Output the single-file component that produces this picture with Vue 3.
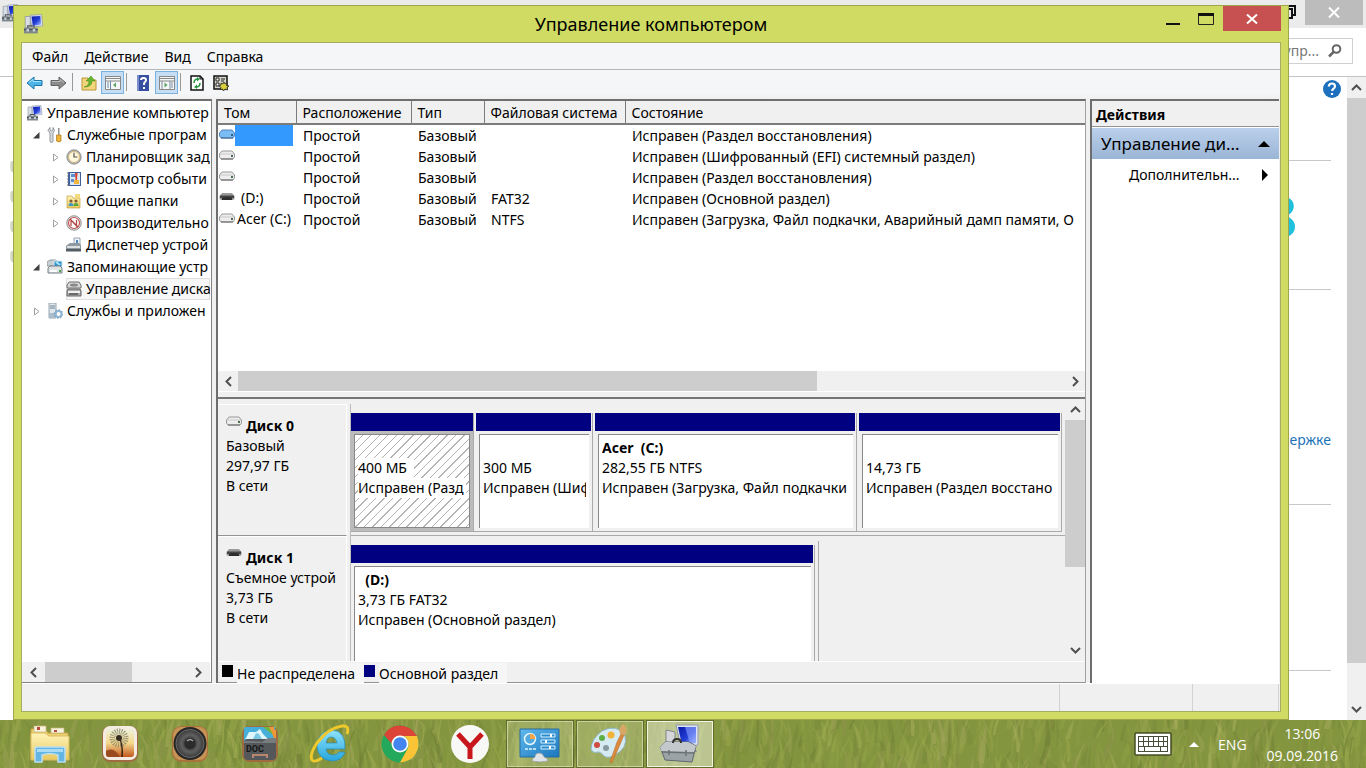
<script setup>
const menu = ['Файл', 'Действие', 'Вид', 'Справка']

const tree = [
  { label: 'Управление компьютер', icon: 'computer', level: 0, arrow: '' },
  { label: 'Служебные програм', icon: 'tools', level: 1, arrow: 'open' },
  { label: 'Планировщик зад', icon: 'clock', level: 2, arrow: 'closed' },
  { label: 'Просмотр событи', icon: 'journal', level: 2, arrow: 'closed' },
  { label: 'Общие папки', icon: 'shared', level: 2, arrow: 'closed' },
  { label: 'Производительно', icon: 'perf', level: 2, arrow: 'closed' },
  { label: 'Диспетчер устрой', icon: 'device', level: 2, arrow: '' },
  { label: 'Запоминающие устр', icon: 'storage', level: 1, arrow: 'open' },
  { label: 'Управление диска', icon: 'disks', level: 2, arrow: '', selected: true },
  { label: 'Службы и приложен', icon: 'services', level: 1, arrow: 'closed' }
]

const volumes = [
  { name: '', icon: 'drive-blue', fs: '', state: 'Исправен (Раздел восстановления)', selected: true },
  { name: '', icon: 'drive', fs: '', state: 'Исправен (Шифрованный (EFI) системный раздел)' },
  { name: '', icon: 'drive', fs: '', state: 'Исправен (Раздел восстановления)' },
  { name: '(D:)', icon: 'drive-dark', fs: 'FAT32', state: 'Исправен (Основной раздел)', spaced: true },
  { name: 'Acer (C:)', icon: 'drive', fs: 'NTFS', state: 'Исправен (Загрузка, Файл подкачки, Аварийный дамп памяти, О' }
]

const disks = [
  {
    name: 'Диск 0', icon: 'drive', lines: ['Базовый', '297,97 ГБ', 'В сети'],
    parts: [
      { name: '', size: '400 МБ', state: 'Исправен (Разд', weight: 122, selected: true },
      { name: '', size: '300 МБ', state: 'Исправен (Шиф', weight: 116 },
      { name: 'Acer  (C:)', size: '282,55 ГБ NTFS', state: 'Исправен (Загрузка, Файл подкачки', weight: 261 },
      { name: '', size: '14,73 ГБ', state: 'Исправен (Раздел восстано', weight: 202 }
    ]
  },
  {
    name: 'Диск 1', icon: 'drive-dark', lines: ['Съемное устрой', '3,73 ГБ', 'В сети'],
    parts: [
      { name: '  (D:)', size: '3,73 ГБ FAT32', state: 'Исправен (Основной раздел)', weight: 463 }
    ],
    rest: 243
  }
]

const apps = [
  { icon: 't-explorer', label: 'Проводник' },
  { icon: 't-photo', label: 'Фото' },
  { icon: 't-speaker', label: 'Музыка' },
  { icon: 't-doc', label: 'Документы' },
  { icon: 't-ie', label: 'Internet Explorer' },
  { icon: 't-chrome', label: 'Chrome' },
  { icon: 't-yandex', label: 'Яндекс' },
  { icon: 't-panel', label: 'Панель управления', open: true },
  { icon: 't-paint', label: 'Paint', open: true },
  { icon: 't-manage', label: 'Управление компьютером', open: true, active: true }
]

let seed = 11
const rnd = () => (seed = (seed * 16807) % 2147483647) / 2147483647
const tints = ['#a9b35a', '#76873a', '#95a54a', '#6e7d35', '#a8ab60', '#8fa044', '#82943f', '#9ba84c', '#8c924c']
const blades = Array.from({ length: 1500 }, () => {
  const x = Math.round(rnd() * 1400 - 15)
  const y = Math.round(rnd() * 70 + 8)
  const h = Math.round(rnd() * 30 + 14)
  const lean = Math.round(rnd() * 26 - 11)
  const w = Math.round(rnd() * 4 + 1)
  return {
    d: `M${x} ${y}Q${x + 1} ${y - h / 2} ${x + lean} ${y - h}Q${x + w + 3} ${y - h / 2} ${x + w} ${y}Z`,
    fill: tints[Math.floor(rnd() * tints.length)],
    o: (0.2 + rnd() * 0.35).toFixed(2)
  }
})
</script>

<template>
  <div class="screen">
    <svg class="defs" width="0" height="0" aria-hidden="true">
      <defs>
        <linearGradient id="gBlue" x1="0" y1="0" x2="1" y2="1"><stop offset="0" stop-color="#0a18a8" /><stop offset=".55" stop-color="#2440d8" /><stop offset="1" stop-color="#c3d4ff" /></linearGradient>
        <linearGradient id="gFolder" x1="0" y1="0" x2="0" y2="1"><stop offset="0" stop-color="#fff3b8" /><stop offset="1" stop-color="#e9c95f" /></linearGradient>
        <linearGradient id="gSky" x1="0" y1="0" x2="1" y2="1"><stop offset="0" stop-color="#5fb9ee" /><stop offset="1" stop-color="#1b76bd" /></linearGradient>
        <linearGradient id="gSunset" x1="0" y1="0" x2="0" y2="1"><stop offset="0" stop-color="#eef0dc" /><stop offset=".5" stop-color="#f4d98e" /><stop offset="1" stop-color="#c2561c" /></linearGradient>
        <linearGradient id="gIe" x1="0" y1="0" x2="0" y2="1"><stop offset="0" stop-color="#8fe3fb" /><stop offset="1" stop-color="#27a6dd" /></linearGradient>
        <radialGradient id="gSpeaker"><stop offset="0" stop-color="#777" /><stop offset=".35" stop-color="#3b3b3b" /><stop offset=".6" stop-color="#606060" /><stop offset="1" stop-color="#3a3a3a" /></radialGradient>
      </defs>
      <symbol id="computer" viewBox="0 0 16 16">
        <path d="M1 2h4v9H1z" fill="#d9dde4" stroke="#8b93a0" stroke-width=".6" />
        <path d="M5 1l9-.5 1 9-9 1z" fill="#dfe5f2" stroke="#8c96ad" stroke-width=".6" />
        <path d="M6 2l7-.5.8 7L7 9.300z" fill="url(#gBlue)" />
        <path d="M0 11h11v4.500H0z" fill="#7d878d" /><path d="M3 11V9.500h5V11M0 12.500h11" fill="none" stroke="#4d555a" /><path d="M2 12h2v2H2zM7 12h2v2H7z" fill="#ccd2d5" />
      </symbol>
      <symbol id="tools" viewBox="0 0 16 16">
        <path d="M3 6v8a1.500 1.500 0 0 0 3 0V6l1.500-2.500L6 .5V3L4.500 4 3 3V.5L1 3.500z" fill="#d9dde0" stroke="#7b8489" stroke-width=".8" />
        <path d="M11 1h1.500v7H11z" fill="#8c9296" /><path d="M9.500 8h4.500v6q-2 2-4.500 0z" fill="#efb437" stroke="#a9761b" stroke-width=".7" />
      </symbol>
      <symbol id="clock" viewBox="0 0 16 16">
        <circle cx="8" cy="8" r="7.200" fill="#aeb3b7" stroke="#777" stroke-width=".7" /><circle cx="8" cy="8" r="5.500" fill="#fff7dd" stroke="#d6b878" /><path d="M8 3.800V8h3.500" fill="none" stroke="#555" stroke-width="1.200" />
      </symbol>
      <symbol id="journal" viewBox="0 0 16 16">
        <path d="M2 1h13v14H2z" fill="#3d5f9f" /><path d="M4 2h10v12H4z" fill="#dce8f4" /><path d="M5 3h4v3H5zM5 8h3v3H5z" fill="#5f8ed0" /><path d="M9 2h2.500l-.5 7H9.500z" fill="#dc3f2d" /><path d="M8 9h5v4H8z" fill="#efb63e" /><path d="M1 2h2M1 5h2M1 8h2M1 11h2M1 14h2" stroke="#777" />
      </symbol>
      <symbol id="shared" viewBox="0 0 16 16">
        <path d="M1 3h5l1 2h7v10H1z" fill="url(#gFolder)" stroke="#c9a03c" stroke-width=".7" /><path d="M9 1h5v4H9z" fill="#f4dc7e" /><circle cx="5" cy="8" r="1.600" fill="#845b30" /><circle cx="10" cy="8" r="1.600" fill="#845b30" /><path d="M2.500 13q0-3 2.500-3t2.500 3z" fill="#3f9ac9" /><path d="M7.500 13q0-3 2.500-3t2.500 3z" fill="#5aa83c" />
      </symbol>
      <symbol id="perf" viewBox="0 0 16 16">
        <circle cx="8" cy="8" r="7.200" fill="#eee" stroke="#888" /><circle cx="8" cy="8" r="5.500" fill="#fff" stroke="#c3524f" stroke-width="1.200" /><path d="M5 11V5l5.500 6V5M4 4l8 8" fill="none" stroke="#b04440" stroke-width="1.200" />
      </symbol>
      <symbol id="device" viewBox="0 0 16 16">
        <path d="M8 1h6v7H8z" fill="#eef3f8" stroke="#82909d" stroke-width=".8" /><path d="M10 3h2v3h-2z" fill="#4f86b9" /><path d="M1 8l3-2h9l2 2v6H0V9z" fill="#8d999f" /><path d="M1 9h13v2H1z" fill="#dbe0e2" /><path d="M0 12h15v2.500H0z" fill="#535d63" />
      </symbol>
      <symbol id="storage" viewBox="0 0 16 16">
        <path d="M0 3l3-2h6l2 2v4H0z" fill="#c9d0d4" stroke="#738086" stroke-width=".7" /><path d="M7 2h8v6H7z" fill="#2d91cb" stroke="#dceaf2" /><path d="M9 3l4 3" stroke="#a9e4ff" stroke-width="2" /><path d="M1 9l2-2h10l2 2v5H1z" fill="#dfe2e3" stroke="#747e82" /><path d="M3 11h7v2H3z" fill="#fff" /><path d="M12 11h2v2h-2z" fill="#45a94b" />
      </symbol>
      <symbol id="disks" viewBox="0 0 16 16">
        <path d="M1 4l2-3h10l2 3v3H1z" fill="#d7d7d7" stroke="#707070" /><ellipse cx="8" cy="4" rx="4" ry="1.500" fill="#888" /><path d="M1 10l1-2h12l1 2v5H1z" fill="#aaa" stroke="#666" /><path d="M2 10h12v2H2z" fill="#eee" /><path d="M3 13h9" stroke="#555" stroke-width="1.500" />
      </symbol>
      <symbol id="services" viewBox="0 0 16 16">
        <path d="M2 0h7v15H2z" fill="#dfe7ed" stroke="#82929e" stroke-width=".8" /><path d="M3 3h5M3 5h5" stroke="#6b8295" /><path d="M2 10h7v5H2z" fill="#aabdca" /><circle cx="11.500" cy="11" r="3" fill="none" stroke="#8eb5d3" stroke-width="2" /><circle cx="11.500" cy="11" r="4.300" fill="none" stroke="#6894b6" stroke-width="1" stroke-dasharray="1.500 1.800" />
      </symbol>
      <symbol id="drive" viewBox="0 0 16 10">
        <path d="M.5 4L3 1h10l2.500 3v3L14 9H2L.5 7z" fill="#ededed" stroke="#909090" stroke-width=".9" /><path d="M1 4h14" stroke="#c9c9c9" /><path d="M2 9h12" stroke="#666" /><path d="M12 5h2v2h-2z" fill="#4d6d4d" />
      </symbol>
      <symbol id="drive-blue" viewBox="0 0 16 10">
        <path d="M.5 4L3 1h10l2.500 3v3L14 9H2L.5 7z" fill="#7bbcf4" stroke="#4a7eb5" stroke-width=".9" /><path d="M2 9h12" stroke="#42648a" /><path d="M12 5h2v2h-2z" fill="#315b82" />
      </symbol>
      <symbol id="drive-dark" viewBox="0 0 16 10">
        <path d="M.5 4L3 1h10l2.500 3v3L14 8H2L.5 7z" fill="#9a9a9a" /><path d="M1 3.500h14V6H1z" fill="#444" /><path d="M3 6q5-2 10 0v2H3z" fill="#2d2d2d" />
      </symbol>

      <symbol id="t-explorer" viewBox="0 0 42 40">
        <path d="M2 5h14l3 4h20v26H2z" fill="#ecd16f" stroke="#c7a443" /><path d="M5 2h12v6H5zM22 4h13v5H22z" fill="#f7f3df" stroke="#cab679" stroke-width=".7" /><path d="M8 3h3v3H8zM25 6h3v2h-3z" fill="#b84b39" /><path d="M2 9h14l4 3h20v24H2z" fill="url(#gFolder)" stroke="#d9bb61" /><path d="M6 25q0-2 2-2h26q2 0 2 2v13h-7V31q-8-3-16 0v7H6z" fill="#64b5e2" stroke="#b9e0f4" stroke-width="1.500" /><path d="M8 25h26v3H8z" fill="#a9dbf5" />
      </symbol>
      <symbol id="t-photo" viewBox="0 0 42 40">
        <rect x="3" y="2" width="36" height="36" rx="8" fill="#a26a43" /><rect x="4" y="2" width="34" height="34" rx="7" fill="#f4ece2" /><rect x="7" y="5" width="28" height="28" rx="3" fill="url(#gSunset)" /><path d="M21 15q3 8 2 18" fill="none" stroke="#38220f" stroke-width="1.500" /><circle cx="20" cy="14" r="6.500" fill="none" stroke="#77765f" stroke-width="6" stroke-dasharray="1 1" opacity=".7" /><circle cx="20" cy="14" r="3" fill="#332b20" /><path d="M7 27q8-5 14 6H10q-3 0-3-3z" fill="#9b4a20" />
      </symbol>
      <symbol id="t-speaker" viewBox="0 0 42 40">
        <rect x="3" y="2" width="36" height="36" rx="9" fill="#a9743c" /><rect x="4" y="3" width="34" height="33" rx="8" fill="#c69255" /><circle cx="21" cy="19.500" r="16.500" fill="#272727" /><circle cx="21" cy="19.500" r="14" fill="url(#gSpeaker)" stroke="#6b6b6b" /><circle cx="21" cy="19.500" r="5.500" fill="#2b2b2b" /><path d="M18 17q3-3 6 0" stroke="#a4a4a4" stroke-width="1.500" fill="none" />
      </symbol>
      <symbol id="t-doc" viewBox="0 0 42 40">
        <rect x="3" y="2" width="36" height="36" rx="8" fill="#a16b40" /><path d="M5 5q0-2 3-2h28v20H5z" fill="#45afd9" /><path d="M27 3h8v8zM31 5l6 1v13z" fill="#ef9739" /><path d="M24 3h6l4 8z" fill="#68b641" /><path d="M7 14l3-6h7l4-3 3 5 5 5H6z" fill="#dff6fb" /><path d="M17 9l-3 6h9l-3-5z" fill="#7cc9e6" /><rect x="5" y="15" width="32" height="21" rx="4" fill="#54585a" /><path d="M5 17q12 0 18 1l6-4h8v5H5z" fill="#777c7e" /><text x="7" y="28" font-size="9" fill="#151515" font-weight="bold" font-family="Roboto, sans-serif">DOC</text><path d="M14 34v-3h14v3" fill="none" stroke="#b9866d" stroke-width="2" />
      </symbol>
      <symbol id="t-ie" viewBox="0 0 42 40">
        <path d="M35 25H17q1 6 7 6 4 0 6-3h6q-3 9-13 9Q9 36 8 22q1-15 15-16 14 1 13 19zM17 19h11q-1-6-6-6-4 0-5 6z" fill="url(#gIe)" stroke="#258bbb" stroke-width=".7" fill-rule="evenodd" /><path d="M13 34Q5 39 3 36 0 31 8 19 19 4 33 2q8-1 5 8" fill="none" stroke="#efc82c" stroke-width="3" />
      </symbol>
      <symbol id="t-chrome" viewBox="0 0 42 40">
        <circle cx="21" cy="20" r="18.500" fill="#24a85b" /><path d="M5 11Q10 1.500 21 1.500T38 12H21q-7 0-8 8z" fill="#db4437" /><path d="M38 12q4 10-2 19-5 7-15 7.500L29 24q2-7-4-12z" fill="#fbc436" /><circle cx="21" cy="20" r="8.500" fill="#fff" /><circle cx="21" cy="20" r="6.800" fill="#4285ee" />
      </symbol>
      <symbol id="t-yandex" viewBox="0 0 42 40"><circle cx="21" cy="20" r="19" fill="#f8f8f7" /><path d="M9 10l12 13 12-13M21 22v13" fill="none" stroke="#c8161d" stroke-width="5" /></symbol>
      <symbol id="t-panel" viewBox="0 0 42 40">
        <path d="M1 5h39v28H1z" fill="url(#gSky)" stroke="#286c9d" /><circle cx="11" cy="15" r="5.500" fill="#55a9df" stroke="#e5f8ff" stroke-width="1.500" /><path d="M11 15V9.500a5.500 5.500 0 0 1 5.500 5.500z" fill="#f5a64b" /><path d="M6 25h11" stroke="#b6def5" stroke-width="2" stroke-dasharray="3 1" /><path d="M22 10h14v3H22zM22 16h14v3H22zM22 22h14v3H22z" fill="#288acb" stroke="#d9f1ff" /><path d="M32 10v3M27 16v3M31 22v3" stroke="#fff" stroke-width="2" /><path d="M13 37q0-3 3-4 0-4 4-4t5 4q4 1 4 4-8 2-16 0z" fill="#dfe3e7" stroke="#8f9a9d" stroke-width=".7" />
      </symbol>
      <symbol id="t-paint" viewBox="0 0 42 40">
        <path d="M13 7Q28-1 36 12q3 12-10 19-7 4-11 1-2-3-5-4-5 2-8-2Q2 15 13 7z" fill="#d6eaf2" stroke="#8fb6c8" /><circle cx="8" cy="21" r="3" fill="#cf4c40" /><circle cx="13" cy="14" r="3" fill="#5daf48" /><circle cx="22" cy="11" r="3.500" fill="#f0b238" /><circle cx="17" cy="24" r="3" fill="#879aa0" /><path d="M21 38l7-20 4-8 3 1-5 12-7 16z" fill="#d98a3c" stroke="#b26b27" stroke-width=".5" /><path d="M31 10Q29 4 34 0q6 4 2 11z" fill="#d8a765" />
      </symbol>
      <symbol id="t-manage" viewBox="0 0 42 40">
        <path d="M7 6l9 2v15l-9-2z" fill="#d5d7da" stroke="#83878c" /><path d="M17 1h22v20l-17 2z" fill="#dfe4f2" stroke="#929bae" /><path d="M19 3h18v16l-14 2z" fill="url(#gBlue)" /><path d="M26 3l5 17 6-1V3z" fill="#8ea5ff" opacity=".6" /><path d="M27 23h8l3 5H24z" fill="#858b8f" /><path d="M1 23l5-5h24l7 4-4 16-27-2z" fill="#9ba3a6" stroke="#60676b" /><path d="M1 23l5-5h23l8 4-2 6-33-1z" fill="#c2c8cb" /><path d="M14 19q0-4 4-4t4 4" fill="none" stroke="#333" stroke-width="2" /><path d="M3 28l32 1M10 26v5M27 26v6" stroke="#6a7174" stroke-width="1.500" />
      </symbol>
    </svg>

    <main class="desktop">
      <section class="back-window" aria-label="Фоновое окно">
        <header class="back-title">
          <svg class="back-icon" width="18" height="18"><use href="#computer" /></svg>
          <svg class="back-restore" width="14" height="14" viewBox="0 0 14 14"><path d="M1 4h9v9H1zM3 4V1h10v9h-3" fill="none" stroke="#111" stroke-width="2" /></svg>
          <button class="back-close" aria-label="Закрыть фон"><svg width="12" height="11" viewBox="0 0 12 11"><path d="M1 .5l10 10M11 .5l-10 10" stroke="#fff" stroke-width="2" /></svg></button>
        </header>
        <div class="back-nav">
          <div class="back-search"><span>упр...</span><svg width="14" height="14" viewBox="0 0 14 14"><circle cx="8.500" cy="5" r="3.800" fill="none" stroke="#666" stroke-width="2" /><path d="M5.500 8L1 12.500" stroke="#666" stroke-width="2.500" /></svg></div>
        </div>
        <div class="back-body">
          <div class="back-side"><i v-for="n in 4" :key="n"></i></div>
          <div class="back-content">
            <div class="back-sec s1"><svg class="help" width="20" height="20" viewBox="0 0 20 20"><circle cx="10" cy="10" r="9" fill="#1c70bd" /><path d="M6.800 7.500Q7 4.500 10 4.500t3 2.800q0 1.700-1.800 2.600-1 .5-1 2M10 14v2" fill="none" stroke="#fff" stroke-width="2.200" /></svg></div>
            <div class="back-sec s2"><span class="logo8">8</span></div>
            <div class="back-sec s3"><a href="#support">ержке</a></div>
            <div class="back-sec s4"></div>
          </div>
          <div class="vbar back-bar">
            <button aria-label="Вверх, фон"><svg width="11" height="7" viewBox="0 0 11 7"><path d="M1 6l4.500-4.500L10 6" /></svg></button>
            <div class="track"><div class="thumb back-thumb"></div></div>
            <button aria-label="Вниз, фон"><svg width="11" height="7" viewBox="0 0 11 7"><path d="M1 1l4.500 4.500L10 1" /></svg></button>
          </div>
        </div>
      </section>

      <section class="window">
        <header class="titlebar">
          <svg class="title-icon" width="20" height="20"><use href="#computer" /></svg>
          <h1>Управление компьютером</h1>
          <div class="controls">
            <button aria-label="Свернуть"><svg width="14" height="12" viewBox="0 0 14 12"><path d="M0 11h14" stroke="#111" stroke-width="2" /></svg></button>
            <button class="max" aria-label="Развернуть"><svg width="16" height="12" viewBox="0 0 16 12"><path d="M.5 0v11.500h15V0" fill="none" stroke="#222" /><path d="M0 1.500h16" stroke="#111" stroke-width="3" /></svg></button>
            <button class="close" aria-label="Закрыть"><svg width="12" height="10" viewBox="0 0 12 10"><path d="M1 .5l10 9M11 .5l-10 9" stroke="#fff" stroke-width="2" /></svg></button>
          </div>
        </header>

        <div class="client">
          <nav class="menubar"><button v-for="m in menu" :key="m">{{ m }}</button></nav>
          <div class="toolbar">
            <button aria-label="Назад"><svg width="17" height="14" viewBox="0 0 17 14"><path d="M1 7l7-6v3.500h8v5H8V13z" fill="#4db4e6" stroke="#1b76aa" /><path d="M3 6.500l4-3v2h8" fill="none" stroke="#a9e2fb" /></svg></button>
            <button aria-label="Вперед"><svg width="17" height="14" viewBox="0 0 17 14"><path d="M16 7L9 1v3.500H1v5h8V13z" fill="#8b8b8b" stroke="#626262" /><path d="M2 5.500h8v-2l4 3" fill="none" stroke="#bbb" /></svg></button>
            <i></i>
            <button aria-label="Вверх на уровень"><svg width="16" height="16" viewBox="0 0 16 16"><path d="M1 3h6l1 2h7v10H1z" fill="#f3d57c" stroke="#bd963b" /><path d="M3 12Q8 11 8 6H5l5-5 4 5h-3q0 6-8 6z" fill="#65b52e" stroke="#438618" stroke-width=".5" /></svg></button>
            <button class="pressed" aria-label="Дерево консоли"><svg width="16" height="16" viewBox="0 0 16 16"><path d="M.5 1.500h15v13H.5z" fill="#f5f6f7" stroke="#888" /><path d="M1 3.500h14M1 6h14" stroke="#888" /><path d="M5.500 6v8M2 8h2M2 10h2M2 12h2" stroke="#6b8baa" /><path d="M11 7.500v5L8 10z" fill="#56a45c" /></svg></button>
            <i></i>
            <button aria-label="Справка"><svg width="16" height="16" viewBox="0 0 16 16"><path d="M2 0h12v16H2z" fill="#364fa0" /><path d="M2 0h2v16H2z" fill="#7a8dcc" /><path d="M6 5Q6 3 8.500 3T11 5q0 1.500-1.500 2.500Q9 8 9 10M9 12v2" stroke="#fff" stroke-width="2" fill="none" /></svg></button>
            <button class="pressed" aria-label="Панель действий"><svg width="16" height="16" viewBox="0 0 16 16"><path d="M.5 1.500h15v13H.5z" fill="#f5f6f7" stroke="#888" /><path d="M1 3.500h14M1 6h14" stroke="#888" /><path d="M11 6v8M3 6v8M12 8h2M12 10h2M12 12h2" stroke="#7a8ba0" /><path d="M5.500 7.500v5l3-2.500z" fill="#56a45c" /></svg></button>
            <i></i>
            <button aria-label="Обновить"><svg width="14" height="16" viewBox="0 0 14 16"><path d="M1 1h9l3 3v11H1z" fill="#fff" stroke="#111" stroke-width="1.500" /><path d="M10 1v3h3" fill="none" stroke="#111" /><path d="M4 8q0-4 4-4M10 8q0 4-4 4" fill="none" stroke="#299442" stroke-width="1.500" /><path d="M7 2l3 2-3 2.500zM7 9.500L4 12l3 2z" fill="#299442" /></svg></button>
            <button aria-label="Параметры"><svg width="16" height="16" viewBox="0 0 16 16"><path d="M1 1h13v13H1z" fill="#d5d4ca" stroke="#111" stroke-width="1.500" /><path d="M3 3h3v3H3zM3 8h3v3H3z" fill="#fff" stroke="#222" /><path d="M8 4h4M8 6h3" stroke="#222" /><path d="M11 7l1 2 2-1-.5 2.500L16 11l-2 1.500.5 2.500-2.500-1-1.500 2-1-2-2.500.5 1-2-2-1.500 2-1V8l2 1z" fill="#dad23c" stroke="#222" stroke-width=".8" /></svg></button>
          </div>

          <div class="panes">
            <aside class="tree-pane">
              <ul class="tree">
                <li v-for="n in tree" :key="n.label" :class="'l' + n.level">
                  <span class="arrow">
                    <svg v-if="n.arrow === 'open'" width="7" height="7" viewBox="0 0 7 7"><path d="M6.500 0v6.500H0z" fill="#404040" /></svg>
                    <svg v-else-if="n.arrow === 'closed'" width="6" height="9" viewBox="0 0 6 9"><path d="M.5 1v7L5 4.500z" fill="#fff" stroke="#a0a0a0" /></svg>
                  </span>
                  <a href="#node" :class="{ sel: n.selected }"><svg width="16" height="16"><use :href="'#' + n.icon" /></svg>{{ n.label }}</a>
                </li>
              </ul>
              <div class="hbar tree-bar">
                <button aria-label="Влево"><svg width="7" height="11" viewBox="0 0 7 11"><path d="M6 1L1.500 5.500 6 10" /></svg></button>
                <div class="track"><div class="thumb tree-thumb"></div></div>
                <button aria-label="Вправо"><svg width="7" height="11" viewBox="0 0 7 11"><path d="M1 1l4.500 4.500L1 10" /></svg></button>
              </div>
            </aside>

            <div class="center-pane">
              <div class="volumes">
                <table>
                  <colgroup><col class="c1" /><col class="c2" /><col class="c3" /><col class="c4" /><col /></colgroup>
                  <thead><tr><th>Том</th><th>Расположение</th><th>Тип</th><th>Файловая система</th><th>Состояние</th></tr></thead>
                  <tbody>
                    <tr v-for="(v, i) in volumes" :key="i">
                      <td class="vol"><div><svg width="16" height="10"><use :href="'#' + v.icon" /></svg><span :class="{ picked: v.selected, spaced: v.spaced }">{{ v.name }}</span></div></td>
                      <td>Простой</td><td>Базовый</td><td>{{ v.fs }}</td><td>{{ v.state }}</td>
                    </tr>
                  </tbody>
                </table>
              </div>
              <div class="hbar list-bar">
                <button aria-label="Список влево"><svg width="7" height="11" viewBox="0 0 7 11"><path d="M6 1L1.500 5.500 6 10" /></svg></button>
                <div class="track"><div class="thumb list-thumb"></div></div>
                <button aria-label="Список вправо"><svg width="7" height="11" viewBox="0 0 7 11"><path d="M1 1l4.500 4.500L1 10" /></svg></button>
              </div>
              <div class="splitter"></div>
              <div class="graph">
                <div class="disks">
                  <div v-for="d in disks" :key="d.name" class="disk">
                    <div class="disk-label">
                      <h2><svg width="16" height="10"><use :href="'#' + d.icon" /></svg>{{ d.name }}</h2>
                      <p v-for="l in d.lines" :key="l">{{ l }}</p>
                    </div>
                    <div class="parts" :class="{ partial: d.rest }">
                      <div v-for="p in d.parts" :key="p.state + p.size" class="part" :class="{ chosen: p.selected }" :style="{ flexGrow: p.weight }">
                        <div class="stripe"></div>
                        <div class="frame"><div class="inner">
                          <p><b>{{ p.name }}</b></p>
                          <p><span>{{ p.size }}</span></p>
                          <p><span>{{ p.state }}</span></p>
                        </div></div>
                      </div>
                      <div v-if="d.rest" class="empty" :style="{ flexGrow: d.rest }"></div>
                    </div>
                  </div>
                </div>
                <div class="vbar graph-bar">
                  <button aria-label="Диски вверх"><svg width="11" height="7" viewBox="0 0 11 7"><path d="M1 6l4.500-4.500L10 6" /></svg></button>
                  <div class="track"><div class="thumb graph-thumb"></div></div>
                  <button aria-label="Диски вниз"><svg width="11" height="7" viewBox="0 0 11 7"><path d="M1 1l4.500 4.500L10 1" /></svg></button>
                </div>
              </div>
              <div class="legend"><span class="sq black"></span><span class="lt">Не распределена</span><span class="sq navy"></span><span class="lt">Основной раздел</span></div>
            </div>

            <aside class="actions">
              <h2>Действия</h2>
              <button class="group"><span>Управление ди...</span><svg width="12" height="6" viewBox="0 0 12 6"><path d="M0 6l6-6 6 6z" /></svg></button>
              <button class="more"><span>Дополнительн...</span><svg width="6" height="12" viewBox="0 0 6 12"><path d="M0 0l6 6-6 6z" /></svg></button>
            </aside>
          </div>
          <footer class="status"><span></span><span></span><span></span></footer>
        </div>
      </section>
    </main>

    <footer class="taskbar">
      <svg class="grass" viewBox="0 0 1366 48" preserveAspectRatio="xMidYMid slice" aria-hidden="true">
        <path v-for="(b, i) in blades" :key="i" :d="b.d" :fill="b.fill" :opacity="b.o" />
      </svg>
      <div class="apps">
        <button v-for="a in apps" :key="a.icon" :class="{ open: a.open, active: a.active }" :aria-label="a.label"><svg width="42" height="40"><use :href="'#' + a.icon" /></svg></button>
      </div>
      <div class="tray">
        <button class="kbd" aria-label="Клавиатура"><svg width="38" height="24" viewBox="0 0 38 24"><rect x="1" y="1" width="36" height="22" rx="1" fill="#fff" stroke="#454c22" stroke-width="1.500" /><path d="M4 4h30v16H4z" fill="#454c3a" /><path d="M5 5h4v4H5zM10 5h4v4h-4zM15 5h4v4h-4zM20 5h4v4h-4zM25 5h4v4h-4zM30 5h3v4h-3zM5 10h4v4H5zM10 10h4v4h-4zM15 10h4v4h-4zM20 10h4v4h-4zM25 10h4v4h-4zM30 10h3v4h-3zM5 15h5v4H5zM11 15h15v4H11zM27 15h6v4h-6z" fill="#fff" /></svg></button>
        <button class="up" aria-label="Скрытые значки"><svg width="10" height="6" viewBox="0 0 10 6"><path d="M0 6l5-5 5 5z" fill="#fff" /></svg></button>
        <span class="lang">ENG</span>
        <div class="time"><span>13:06</span><span>09.09.2016</span></div>
      </div>
    </footer>
  </div>
</template>

<style>
body { overflow: hidden; }
</style>

<style scoped>
* { box-sizing: border-box; }
.screen { display: flex; flex-direction: column; height: 100vh; overflow: hidden; font: 14px/20px "Noto Sans", "Open Sans", sans-serif; color: #000; }
.defs { position: absolute; }
button { border: 0; padding: 0; background: none; font: inherit; color: inherit; display: flex; align-items: center; justify-content: center; }
a { color: inherit; text-decoration: none; }
h1, h2, p, ul { margin: 0; padding: 0; font-weight: 400; list-style: none; }
h2 { font-size: 14px; }
svg { flex: none; display: block; }
.desktop { position: relative; flex: 1; min-height: 0; }

.back-window { height: 100%; display: flex; flex-direction: column; background: #fff; }
.back-title { height: 28px; background: #ebebeb; display: flex; align-items: flex-start; }
.back-icon { margin: 4px 0 0 2px; }
.back-restore { margin: 5px 9px 0 auto; }
.back-close { width: 58px; height: 25px; background: #bcbcbc; margin-right: 3px; }
.back-nav { height: 49px; display: flex; justify-content: flex-end; padding: 10px 13px 0 0; border-bottom: 1px solid #c4c4c4; }
.back-search { width: 110px; height: 26px; border: 1px solid #d0d0d0; display: flex; align-items: center; justify-content: flex-end; gap: 9px; padding-right: 10px; color: #777; }
.back-body { flex: 1; display: flex; min-height: 0; }
.back-side { width: 20px; padding: 84px 0 0 10px; display: flex; flex-direction: column; gap: 18px; }
.back-side i { width: 10px; height: 12px; border-radius: 3px 3px 6px 6px; background: linear-gradient(90deg, #dfe3cf, #8fa2a8); }
.back-content { flex: 1; display: flex; flex-direction: column; align-items: flex-end; padding-right: 16px; }
.back-sec { width: 100px; border-bottom: 1px solid #c8c8c8; display: flex; justify-content: flex-end; }
.s1 { height: 84px; } .s2 { height: 129px; padding: 24px 34px 0 0; } .s3 { height: 215px; align-items: flex-end; padding-bottom: 54px; } .s4 { height: 166px; }
.help { margin: 2px -11px 0 0; }
.logo8 { font: 700 56px/60px "Open Sans", sans-serif; color: #1fc1dc; }
.back-sec a { color: #1c73b8; }
.back-bar { width: 19px; }

.window { position: absolute; top: 5px; left: 13px; right: 77px; bottom: 0; display: flex; flex-direction: column; background: #cfdb63; border: 1px solid #9da64a; padding: 0 7px 7px; }
.titlebar { flex: none; height: 36px; display: grid; grid-template-columns: 1fr auto 1fr; }
.title-icon { margin: 8px 0 0 3px; }
h1 { font-size: 18px; line-height: 36px; }
.controls { display: flex; justify-content: flex-end; }
.controls button { width: 33px; height: 25px; }
.controls .max { margin-right: 1px; }
.controls .close { width: 58px; background: #c75050; }
.client { flex: 1; min-height: 0; display: flex; flex-direction: column; border: 1px solid #a5ad62; background: #f0f0f0; }
.menubar { flex: none; height: 27px; background: #f5f6f7; border-bottom: 1px solid #b5b8bb; display: flex; gap: 16px; padding: 1px 0 0 10px; }
.toolbar { flex: none; height: 29px; background: linear-gradient(#f5f6f7 80%, #f0f0f0); display: flex; align-items: flex-start; gap: 1px; padding: 1px 0 0 1px; }
.toolbar button { width: 23px; height: 23px; }
.toolbar button.pressed { background: #c5def3; border: 1px solid #7bb1df; }
.toolbar i { width: 1px; height: 18px; background: #999; margin: 2px 3px 0 1px; }

.panes { flex: 1; min-height: 0; display: grid; grid-template-columns: 190px minmax(0, 1fr) 189px; gap: 4px; padding-right: 1px; }
.tree-pane, .center-pane, .actions { display: flex; flex-direction: column; min-height: 0; min-width: 0; border-top: 2px solid #6e6e70; }
.tree-pane { background: #fff; border-right: 1px solid #828282; border-bottom: 1px solid #828282; padding-right: 1px; }
.tree { flex: 1; min-height: 0; overflow: hidden; padding: 1px 0 0 1px; }
.tree li { display: flex; height: 22px; }
.arrow { flex: none; width: 19px; display: flex; align-items: center; justify-content: center; padding-right: 2px; }
.l0 .arrow { width: 4px; padding: 0; } .l1 { padding-left: 5px; } .l2 { padding-left: 24px; }
.tree a { flex: 1; min-width: 0; display: flex; align-items: center; gap: 4px; white-space: nowrap; overflow: hidden; }
.tree a.sel { background: #f7f7f7; box-shadow: inset 0 0 0 1px #dedede; }

.hbar { flex: none; height: 20px; display: flex; background: #f0f0f0; }
.vbar { flex: none; display: flex; flex-direction: column; background: #f0f0f0; }
.hbar button { width: 20px; } .vbar button { height: 21px; }
.tree-bar button { width: 23px; }
.hbar button svg, .vbar button svg { fill: none; stroke: #505050; stroke-width: 2; }
.track { flex: 1; min-width: 0; min-height: 0; }
.thumb { background: #cdcdcd; }
.hbar .thumb { height: 100%; }
.tree-thumb { width: 61%; } .list-thumb { width: 70%; } .graph-thumb { height: 67%; } .back-thumb { height: 94%; }

.center-pane { border-left: 2px solid #6e6e70; border-right: 1px solid #a0a0a0; }
.volumes { flex: 1; min-height: 0; background: #fff; overflow: hidden; }
table { width: 100%; table-layout: fixed; border-collapse: collapse; }
.c1 { width: 78px; } .c2 { width: 115px; } .c3 { width: 73px; } .c4 { width: 141px; }
th { height: 23px; padding: 2px 0 0 6px; background: #f0f0f0; font-weight: 400; text-align: left; white-space: nowrap; border-right: 1px solid #7b7b7b; border-bottom: 2px solid #7b7b7b; }
th:last-child { border-right: 0; }
td { height: 21px; padding: 0 0 0 7px; white-space: nowrap; overflow: hidden; }
td.vol { padding: 0 3px 0 1px; }
.vol div { display: flex; height: 21px; }
.vol svg { margin-top: 4px; }
.vol span { flex: 1; padding-left: 2px; }
.vol .picked { background: #3399ff; }
.vol .spaced { padding-left: 6px; }
.splitter { flex: none; height: 8px; background: #f0f0f0; border-bottom: 2px solid #767676; border-top: 1px solid #fff; }
.graph { flex: none; height: 262px; display: flex; }
.graph-bar { width: 20px; }
.disks { flex: 1; min-width: 0; overflow: hidden; display: flex; flex-direction: column; padding-top: 5px; }
.disk { flex: none; height: 132px; display: flex; }
.disk-label { width: 129px; flex: none; padding: 11px 0 0 8px; border-top: 1px solid #fff; border-right: 1px solid #fff; border-bottom: 1px solid #929292; overflow: hidden; white-space: nowrap; }
.disk-label p { overflow: hidden; }
.disk-label h2 { display: flex; gap: 4px; font-weight: 700; }
.parts { flex: 1; min-width: 0; display: flex; margin-left: 3px; padding: 9px 3px 3px 0; border-bottom: 1px solid #aaa; border-left: 1px solid #bbb; }
.part { flex: 0 1 0; min-width: 0; display: flex; flex-direction: column; border-right: 1px solid #aaa; border-bottom: 1px solid #aaa; }
.part + .part { padding-left: 2px; }
.stripe { flex: none; height: 18px; margin-right: 1px; background: #000080; }
.frame { flex: 1; min-height: 0; padding: 3px; }
.inner { height: 100%; background: #fff; border-top: 1px solid #888; border-left: 1px solid #888; padding: 3px 3px 0; overflow: hidden; white-space: pre; }
.inner p { height: 20px; overflow: hidden; }
.part b { font-weight: 700; }
.chosen .stripe { margin-right: 0; }
.chosen .frame { background: #bbb; }
.chosen .inner { border: 1px solid #888; background: repeating-linear-gradient(135deg, #fff 0 5px, #b4b4b4 5px 6px); }
.chosen span { display: inline-block; background: #fff; padding-right: 7px; }
.partial { border-bottom: 0; }
.empty { flex: 0 1 0; border-left: 1px solid #aaa; margin: -4px 0 -4px 3px; }
.legend { flex: none; height: 22px; display: flex; align-items: flex-start; padding: 1px 0 0 4px; border-top: 1px solid #fff; border-bottom: 1px solid #929292; }
.sq { width: 11px; height: 12px; margin-top: 2px; }
.black { background: #000; } .navy { background: #000080; }
.lt { margin-left: 4px; padding-right: 9px; background: #f6f6f6; height: 20px; line-height: 22px; }

.actions { background: #fff; border-left: 2px solid #6e6e70; }
.actions h2 { font-weight: 700; height: 26px; line-height: 28px; padding-left: 4px; background: #f0f0f0; border-bottom: 1px solid #929292; }
.actions button { text-align: left; justify-content: space-between; }
.actions span { min-width: 0; white-space: nowrap; }
.actions .group { height: 31px; margin-top: 1px; padding: 0 9px; background: linear-gradient(#bad0eb, #9bb5d6); font-size: 17px; }
.actions .more { height: 31px; padding: 0 11px 0 37px; }
.status { flex: none; height: 28px; border-top: 1px solid #fff; display: flex; justify-content: flex-end; }
.status span { border-left: 1px solid #d2d2d2; width: 133px; }
.status span:nth-child(2) { width: 86px; } .status span:nth-child(3) { width: 2px; }

.taskbar { position: relative; flex: none; height: 48px; background: #84953f; display: flex; justify-content: space-between; overflow: hidden; }
.grass { position: absolute; inset: 0; width: 100%; height: 100%; }
.apps, .tray { position: relative; display: flex; }
.apps { gap: 4px; padding: 1px 0 1px 17px; }
.apps button { width: 66px; }
.apps .open { border: 1px solid #c9d29c; background: rgba(205, 214, 160, .35); box-shadow: 0 0 0 1px rgba(60, 70, 20, .5); }
.apps .active { border-color: #f3f5df; background: rgba(225, 230, 200, .6); }
.tray { align-items: center; color: #fff; padding-right: 28px; font-family: "Open Sans", sans-serif; }
.up { margin-left: 17px; }
.lang { margin: 2px 20px 0 19px; }
.time { display: flex; flex-direction: column; align-items: center; line-height: 22px; padding-top: 2px; }
</style>
